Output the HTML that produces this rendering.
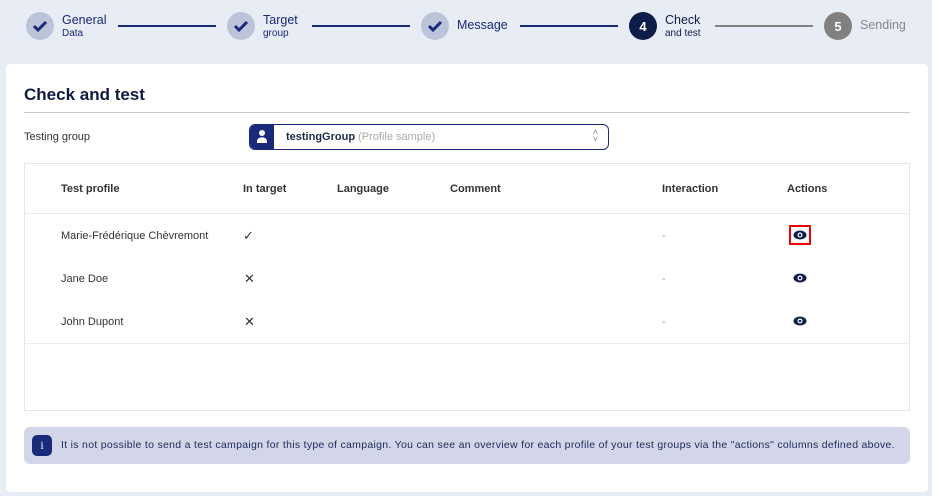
<!DOCTYPE html>
<html><head><meta charset="utf-8"><style>
*{margin:0;padding:0;box-sizing:border-box}
body{width:932px;height:496px;background:#e8ecf5;font-family:"Liberation Sans",sans-serif;position:relative;overflow:hidden;color:#222}
.a{position:absolute;white-space:nowrap}
.c{position:absolute;width:28px;height:28px;border-radius:50%;top:12px;display:flex;align-items:center;justify-content:center}
.done{background:#bcc4da}
.ln{position:absolute;top:25px;height:2px;width:98px;background:#1a2a7a}
.st{font-size:12.5px;color:#1a2a7a;top:13px}
.sub{font-size:10px;color:#1a2a7a;top:28px}
.th{font-size:11px;font-weight:bold;color:#333;top:182px}
.td{font-size:11px;color:#333}
</style></head><body>
<div class="c done" style="left:26px"><svg width="16" height="12" viewBox="0 0 16 12"><path d="M2 6l4 4 8-8" stroke="#1a2a7a" stroke-width="3" fill="none"/></svg></div>
<div class="a st" style="left:62px">General</div><div class="a sub" style="left:62px">Data</div>
<div class="ln" style="left:118px"></div>
<div class="c done" style="left:227px"><svg width="16" height="12" viewBox="0 0 16 12"><path d="M2 6l4 4 8-8" stroke="#1a2a7a" stroke-width="3" fill="none"/></svg></div>
<div class="a st" style="left:263px">Target</div><div class="a sub" style="left:263px">group</div>
<div class="ln" style="left:312px"></div>
<div class="c done" style="left:421px"><svg width="16" height="12" viewBox="0 0 16 12"><path d="M2 6l4 4 8-8" stroke="#1a2a7a" stroke-width="3" fill="none"/></svg></div>
<div class="a st" style="left:457px;top:18px">Message</div>
<div class="ln" style="left:520px"></div>
<div class="c" style="left:629px;background:#0f1d4a;color:#fff;font-weight:bold;font-size:13px">4</div>
<div class="a st" style="left:665px;color:#0f1d4a">Check</div><div class="a sub" style="left:665px;color:#0f1d4a">and test</div>
<div class="ln" style="left:715px;background:#808080"></div>
<div class="c" style="left:824px;background:#808080;color:#fff;font-weight:bold;font-size:13px">5</div>
<div class="a st" style="left:860px;top:18px;color:#888">Sending</div>

<div class="a" style="left:6px;top:64px;width:922px;height:428px;background:#fff;border-radius:4px"></div>
<div class="a" style="left:24px;top:85px;font-size:17px;font-weight:bold;color:#0f1a40">Check and test</div>
<div class="a" style="left:24px;top:112px;width:886px;height:1px;background:#c8c8c8"></div>
<div class="a td" style="left:24px;top:131px">Testing group</div>
<div class="a" style="left:249px;top:124px;width:360px;height:26px;border:1px solid #1a2a7a;border-radius:6px;overflow:hidden">
 <div style="position:absolute;left:0;top:0;width:24px;height:100%;background:#1a2a7a"><svg width="24" height="24" viewBox="0 0 24 24"><circle cx="12" cy="8" r="3" fill="#fff"/><path d="M7 18v-2a4 3 0 0 1 10 0v2z" fill="#fff"/></svg></div>
 <div style="position:absolute;left:36px;top:6px;font-size:11px"><b style="color:#1a2a4a">testingGroup</b> <span style="color:#aaa">(Profile sample)</span></div>
 <div style="position:absolute;right:10px;top:4px;font-size:9px;color:#888;line-height:7px">˄<br>˅</div>
</div>
<div class="a" style="left:24px;top:163px;width:886px;height:248px;border:1px solid #e5e5e5"></div>
<div class="a" style="left:24px;top:213px;width:886px;height:1px;background:#ececec"></div>
<div class="a" style="left:24px;top:343px;width:886px;height:1px;background:#ececec"></div>
<div class="a th" style="left:61px;top:183px">Test profile</div>
<div class="a th" style="left:243px;top:183px">In target</div>
<div class="a th" style="left:337px;top:183px">Language</div>
<div class="a th" style="left:450px;top:183px">Comment</div>
<div class="a th" style="left:662px;top:183px">Interaction</div>
<div class="a th" style="left:787px;top:183px">Actions</div>

<div class="a td" style="left:61px;top:230px">Marie-Frédérique Chèvremont</div>
<div class="a td" style="left:243px;top:228px;font-size:13px">✓</div>
<div class="a td" style="left:662px;top:230px;color:#999">-</div>
<div class="a" style="left:789px;top:225px;width:22px;height:20px;border:2px solid #e00"></div>
<div class="a td" style="left:61px;top:273px">Jane Doe</div>
<div class="a td" style="left:244px;top:271px;font-size:13px">✕</div>
<div class="a td" style="left:662px;top:273px;color:#999">-</div>
<div class="a td" style="left:61px;top:316px">John Dupont</div>
<div class="a td" style="left:244px;top:314px;font-size:13px">✕</div>
<div class="a td" style="left:662px;top:316px;color:#999">-</div>
<svg class="a" style="left:793px;top:230px" width="14" height="10" viewBox="0 0 14 10"><ellipse cx="7" cy="5" rx="6.5" ry="4.5" fill="#0f1d4a"/><circle cx="7" cy="5" r="2.5" fill="#fff"/><circle cx="7" cy="5" r="1.3" fill="#0f1d4a"/></svg>
<svg class="a" style="left:793px;top:273px" width="14" height="10" viewBox="0 0 14 10"><ellipse cx="7" cy="5" rx="6.5" ry="4.5" fill="#0f1d4a"/><circle cx="7" cy="5" r="2.5" fill="#fff"/><circle cx="7" cy="5" r="1.3" fill="#0f1d4a"/></svg>
<svg class="a" style="left:793px;top:316px" width="14" height="10" viewBox="0 0 14 10"><ellipse cx="7" cy="5" rx="6.5" ry="4.5" fill="#0f1d4a"/><circle cx="7" cy="5" r="2.5" fill="#fff"/><circle cx="7" cy="5" r="1.3" fill="#0f1d4a"/></svg>

<div class="a" style="left:24px;top:427px;width:886px;height:37px;background:#d3d6e8;border-radius:6px"></div>
<div class="a" style="left:32px;top:435px;width:20px;height:21px;background:#1a2a7a;border-radius:5px;color:#fff;font-size:12px;font-family:'Liberation Serif',serif;text-align:center;line-height:21px">i</div>
<div class="a" style="left:61px;top:439px;font-size:10.5px;color:#1a2a5a;letter-spacing:0.3px">It is not possible to send a test campaign for this type of campaign. You can see an overview for each profile of your test groups via the "actions" columns defined above.</div>
</body></html>
